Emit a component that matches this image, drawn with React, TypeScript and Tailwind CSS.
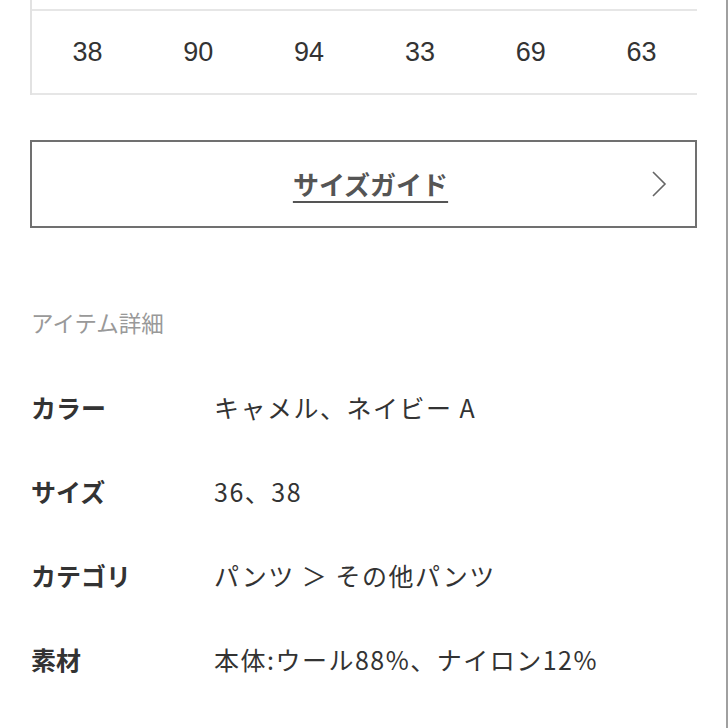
import React from 'react';

const sizes = ['38', '90', '94', '33', '69', '63'];

const details = [
  { label: 'カラー', value: 'キャメル、ネイビー A' },
  { label: 'サイズ', value: '36、38' },
  { label: 'カテゴリ', value: 'パンツ ＞ その他パンツ' },
  { label: '素材', value: '本体:ウール88%、ナイロン12%' },
];

export default function App() {
  return (
    <div
      className="w-[728px] h-[728px] overflow-hidden bg-white border-r-2 border-[#a0a0a0]"
      style={{ fontFamily: '"Noto Sans CJK JP", "Noto Sans", sans-serif' }}
    >
      <div className="pl-[30px] pr-[29px]">
        {/* Size table (cut off at top) */}
        <div className="border-l-2 border-[#e2e2e2]">
          <div className="h-[9px]" />
          <div className="grid grid-cols-6 h-[86px] items-center border-y-2 border-[#e6e6e6]">
            {sizes.map((s, i) => (
              <div
                key={i}
                className="text-center text-[27px] text-[#333]"
                style={{ fontFamily: '"Liberation Sans", Arial, sans-serif' }}
              >
                {s}
              </div>
            ))}
          </div>
        </div>

        {/* Size guide button */}
        <button className="mt-[45px] w-full h-[88px] border-2 border-[#707070] flex items-center justify-center relative">
          <span className="ml-[14px] text-[26px] font-bold text-[#555] underline decoration-2 underline-offset-[6px] leading-none">
            サイズガイド
          </span>
          <svg
            className="absolute right-[28px] top-1/2 -translate-y-1/2"
            width="16"
            height="28"
            viewBox="0 0 16 28"
            fill="none"
          >
            <polyline points="2,2 14,14 2,26" stroke="#666" strokeWidth="1.6" />
          </svg>
        </button>

        {/* Item details */}
        <h3 className="mt-[78px] text-[22.5px] leading-[32px] text-[#999] pl-[1px]">アイテム詳細</h3>
        <div className="mt-[28px]">
          {details.map((d) => (
            <div key={d.label} className="flex items-center h-[84px] pl-[1px]">
              <div className="w-[183px] text-[25px] font-bold text-[#333]">{d.label}</div>
              <div className="text-[25px] tracking-[1.5px] text-[#333]">{d.value}</div>
            </div>
          ))}
        </div>
      </div>
    </div>
  );
}
